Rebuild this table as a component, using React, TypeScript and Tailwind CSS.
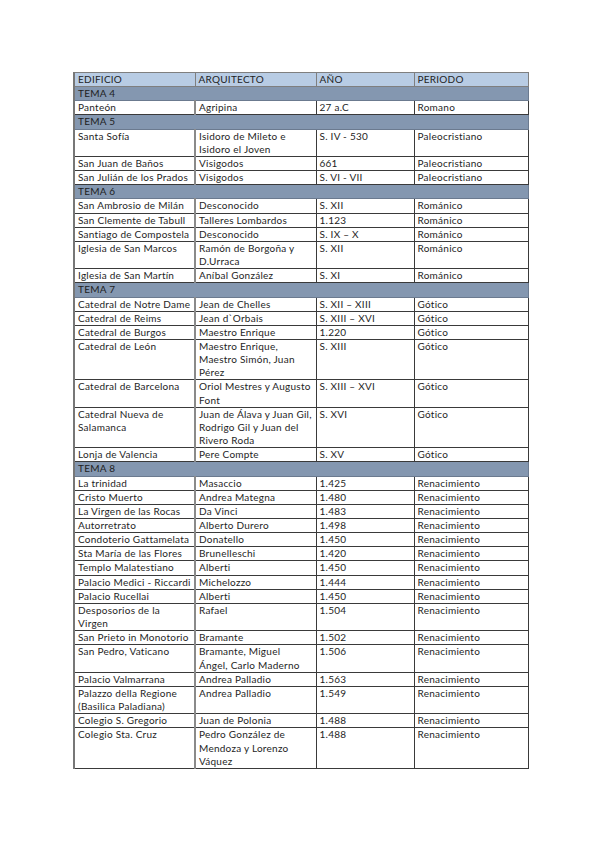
import React from "react";

type Row = { t: "tema"; n: string } | { t: "d"; c: [string, string, string, string] };

const rows: Row[] = [
  { t: "tema", n: "TEMA 4" },
  { t: "d", c: ["Panteón", "Agripina", "27 a.C", "Romano"] },
  { t: "tema", n: "TEMA 5" },
  { t: "d", c: ["Santa Sofía", "Isidoro de Mileto e\nIsidoro el Joven", "S. IV - 530", "Paleocristiano"] },
  { t: "d", c: ["San Juan de Baños", "Visigodos", "661", "Paleocristiano"] },
  { t: "d", c: ["San Julián de los Prados", "Visigodos", "S. VI - VII", "Paleocristiano"] },
  { t: "tema", n: "TEMA 6" },
  { t: "d", c: ["San Ambrosio de Milán", "Desconocido", "S. XII", "Románico"] },
  { t: "d", c: ["San Clemente de Tabull", "Talleres Lombardos", "1.123", "Románico"] },
  { t: "d", c: ["Santiago de Compostela", "Desconocido", "S. IX – X", "Románico"] },
  { t: "d", c: ["Iglesia de San Marcos", "Ramón de Borgoña y\nD.Urraca", "S. XII", "Románico"] },
  { t: "d", c: ["Iglesia de San Martín", "Aníbal González", "S. XI", "Románico"] },
  { t: "tema", n: "TEMA 7" },
  { t: "d", c: ["Catedral de Notre Dame", "Jean de Chelles", "S. XII – XIII", "Gótico"] },
  { t: "d", c: ["Catedral de Reims", "Jean d`Orbais", "S. XIII – XVI", "Gótico"] },
  { t: "d", c: ["Catedral de Burgos", "Maestro Enrique", "1.220", "Gótico"] },
  { t: "d", c: ["Catedral de León", "Maestro Enrique,\nMaestro Simón, Juan\nPérez", "S. XIII", "Gótico"] },
  { t: "d", c: ["Catedral de Barcelona", "Oriol Mestres y Augusto\nFont", "S. XIII – XVI", "Gótico"] },
  { t: "d", c: ["Catedral Nueva de\nSalamanca", "Juan de Álava y Juan Gil,\nRodrigo Gil y Juan del\nRivero Roda", "S. XVI", "Gótico"] },
  { t: "d", c: ["Lonja de Valencia", "Pere Compte", "S. XV", "Gótico"] },
  { t: "tema", n: "TEMA 8" },
  { t: "d", c: ["La trinidad", "Masaccio", "1.425", "Renacimiento"] },
  { t: "d", c: ["Cristo Muerto", "Andrea Mategna", "1.480", "Renacimiento"] },
  { t: "d", c: ["La Virgen de las Rocas", "Da Vinci", "1.483", "Renacimiento"] },
  { t: "d", c: ["Autorretrato", "Alberto Durero", "1.498", "Renacimiento"] },
  { t: "d", c: ["Condoterio Gattamelata", "Donatello", "1.450", "Renacimiento"] },
  { t: "d", c: ["Sta María de las Flores", "Brunelleschi", "1.420", "Renacimiento"] },
  { t: "d", c: ["Templo Malatestiano", "Alberti", "1.450", "Renacimiento"] },
  { t: "d", c: ["Palacio Medici - Riccardi", "Michelozzo", "1.444", "Renacimiento"] },
  { t: "d", c: ["Palacio Rucellai", "Alberti", "1.450", "Renacimiento"] },
  { t: "d", c: ["Desposorios de la\nVirgen", "Rafael", "1.504", "Renacimiento"] },
  { t: "d", c: ["San Prieto in Monotorio", "Bramante", "1.502", "Renacimiento"] },
  { t: "d", c: ["San Pedro, Vaticano", "Bramante, Miguel\nÁngel, Carlo Maderno", "1.506", "Renacimiento"] },
  { t: "d", c: ["Palacio Valmarrana", "Andrea Palladio", "1.563", "Renacimiento"] },
  { t: "d", c: ["Palazzo della Regione\n(Basilica Paladiana)", "Andrea Palladio", "1.549", "Renacimiento"] },
  { t: "d", c: ["Colegio S. Gregorio", "Juan de Polonia", "1.488", "Renacimiento"] },
  { t: "d", c: ["Colegio Sta. Cruz", "Pedro González de\nMendoza y Lorenzo\nVáquez", "1.488", "Renacimiento"] },
];

const cell = "border border-[#3a3a3a] px-[3px] py-0 align-top whitespace-pre-line";

export default function App() {
  return (
    <div
      className="min-h-[848px] w-[599px] bg-white pl-[73px] pt-[72px] text-[#1e1e1e]"
      style={{ fontFamily: "Lato, 'Open Sans', sans-serif" }}
    >
      <table className="w-[454px] table-fixed border-collapse border-l-2 border-l-[#777] text-[10px] leading-[13.15px] tracking-[0.25px]">
        <colgroup>
          <col className="w-[121px]" />
          <col className="w-[121px]" />
          <col className="w-[98px]" />
          <col className="w-[114px]" />
        </colgroup>
        <tbody>
          <tr className="bg-[#b8cce4]">
            <td className={`${cell} border-[#7f7f7f]`}>EDIFICIO</td>
            <td className={`${cell} border-[#7f7f7f]`}>ARQUITECTO</td>
            <td className={`${cell} border-[#7f7f7f]`}>AÑO</td>
            <td className={`${cell} border-[#7f7f7f]`}>PERIODO</td>
          </tr>
          {rows.map((r, i) =>
            r.t === "tema" ? (
              <tr key={i} className="bg-[#8497b0]">
                <td colSpan={4} className={`${cell} border-[#6b7a8f]`}>
                  {r.n}
                </td>
              </tr>
            ) : (
              <tr key={i}>
                {r.c.map((c, j) => (
                  <td key={j} className={`${cell} ${j === 1 ? "border-l-[#8a8a8a] border-l-2" : ""}`}>
                    {c}
                  </td>
                ))}
              </tr>
            )
          )}
        </tbody>
      </table>
    </div>
  );
}
